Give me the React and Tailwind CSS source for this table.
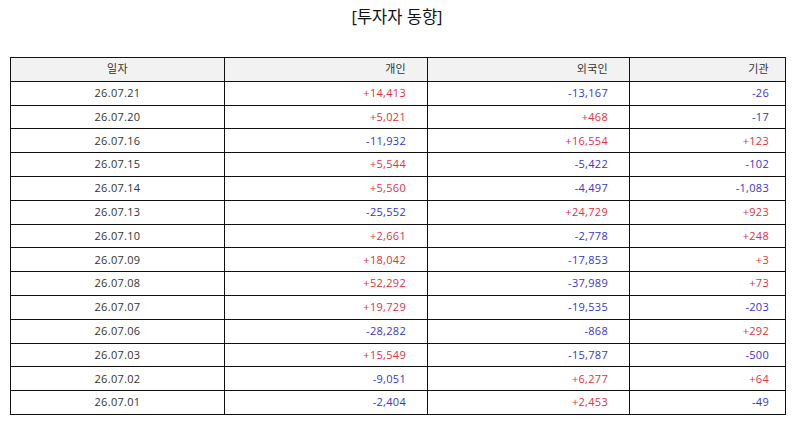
const rows = [
  ['26.07.21', '+14,413', '-13,167', '-26'],
  ['26.07.20', '+5,021', '+468', '-17'],
  ['26.07.16', '-11,932', '+16,554', '+123'],
  ['26.07.15', '+5,544', '-5,422', '-102'],
  ['26.07.14', '+5,560', '-4,497', '-1,083'],
  ['26.07.13', '-25,552', '+24,729', '+923'],
  ['26.07.10', '+2,661', '-2,778', '+248'],
  ['26.07.09', '+18,042', '-17,853', '+3'],
  ['26.07.08', '+52,292', '-37,989', '+73'],
  ['26.07.07', '+19,729', '-19,535', '-203'],
  ['26.07.06', '-28,282', '-868', '+292'],
  ['26.07.03', '+15,549', '-15,787', '-500'],
  ['26.07.02', '-9,051', '+6,277', '+64'],
  ['26.07.01', '-2,404', '+2,453', '-49'],
]

// 부호에 따라 색상
function tone(v) {
  return v.startsWith('+') ? 'text-[#e5303a]' : 'text-[#3535d0]'
}

export default function App() {
  return (
    <div
      className="min-h-[425px] w-[794px] bg-white"
      style={{ fontFamily: '"Open Sans", "Noto Sans CJK KR", sans-serif' }}
    >
      <div className="flex h-[57px] justify-center pt-[4px] text-[16.5px] leading-[26px] text-[#111]">
        [투자자 동향]
      </div>
      <table className="ml-[10px] w-[775px] table-fixed border-collapse text-[11px] tracking-[0.3px] text-[#333]">
        <colgroup>
          <col className="w-[214px]" />
          <col className="w-[203px]" />
          <col className="w-[202px]" />
          <col className="w-[156px]" />
        </colgroup>
        <thead>
          <tr className="h-[23.8px] bg-[#f2f2f2]">
            <th className="border border-[#111] p-0 text-center font-normal">일자</th>
            <th className="border border-[#111] p-0 pr-[21px] text-right font-normal">개인</th>
            <th className="border border-[#111] p-0 pr-[21px] text-right font-normal">외국인</th>
            <th className="border border-[#111] p-0 pr-[16px] text-right font-normal">기관</th>
          </tr>
        </thead>
        <tbody>
          {rows.map(([d, a, b, c]) => (
            <tr key={d} className="h-[23.8px]">
              <td className="border border-[#111] p-0 text-center">{d}</td>
              <td className={`border border-[#111] p-0 pr-[21px] text-right ${tone(a)}`}>{a}</td>
              <td className={`border border-[#111] p-0 pr-[21px] text-right ${tone(b)}`}>{b}</td>
              <td className={`border border-[#111] p-0 pr-[16px] text-right ${tone(c)}`}>{c}</td>
            </tr>
          ))}
        </tbody>
      </table>
    </div>
  )
}
